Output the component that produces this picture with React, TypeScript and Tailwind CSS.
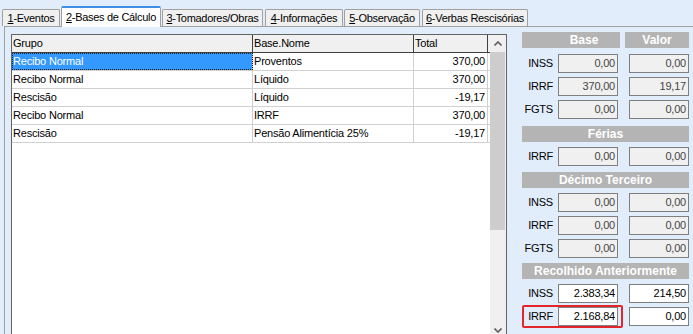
import React from "react"

const rows = [
  { grupo: "Recibo Normal", base: "Proventos", total: "370,00" },
  { grupo: "Recibo Normal", base: "Líquido", total: "370,00" },
  { grupo: "Rescisão", base: "Líquido", total: "-19,17" },
  { grupo: "Recibo Normal", base: "IRRF", total: "370,00" },
  { grupo: "Rescisão", base: "Pensão Alimentícia 25%", total: "-19,17" },
]

const tabs = [
  { key: "1", label: "-Eventos", cls: "w-[58px]" },
  { key: "2", label: "-Bases de Cálculo", cls: "w-[100px]", active: true },
  { key: "3", label: "-Tomadores/Obras", cls: "w-[101px]" },
  { key: "4", label: "-Informações", cls: "w-[78px] ml-[1px]" },
  { key: "5", label: "-Observação", cls: "w-[76px]" },
  { key: "6", label: "-Verbas Rescisórias", cls: "w-[106px] ml-[1px]" },
]

function Chevron({ up }: { up?: boolean }) {
  return (
    <svg width="8" height="5" viewBox="0 0 8 5" className="block">
      <polyline
        points={up ? "0.5,4.5 4,1 7.5,4.5" : "0.5,0.5 4,4 7.5,0.5"}
        fill="none"
        stroke="#606060"
        strokeWidth="1.6"
      />
    </svg>
  )
}

function Box({ value, white, className }: { value: string; white?: boolean; className: string }) {
  return (
    <div
      className={`h-[19px] border border-[#7f7f7f] flex items-center justify-end pr-[2px] ${
        white ? "bg-white text-black" : "bg-[#f0f0f0] text-[#454545]"
      } ${className}`}
    >
      {value}
    </div>
  )
}

function Field({ label, base, valor, white, mark, className = "" }: {
  label: string
  base: string
  valor: string
  white?: boolean
  mark?: boolean
  className?: string
}) {
  return (
    <div className={`flex items-center h-[23px] ${className}`}>
      <div
        className={`flex items-center h-[23px] w-[101px] border-2 rounded-[2px] ${
          mark ? "border-[#e3262c]" : "border-transparent"
        }`}
      >
        <span className="w-[29px] text-right text-black">{label}</span>
        <Box value={base} white={white} className="ml-[5px] w-[60px]" />
      </div>
      <Box value={valor} white={white} className="ml-[6px] w-[60px]" />
    </div>
  )
}

function Bar({ children, className = "" }: { children: React.ReactNode; className?: string }) {
  return (
    <div className={`h-[16px] w-[167px] bg-[#b4b4b4] text-white font-bold text-[12px] tracking-normal flex items-center justify-center ${className}`}>
      {children}
    </div>
  )
}

export default function App() {
  return (
    <div
      className="h-[334px] w-[693px] overflow-hidden bg-[#e2edfb] text-[11px] tracking-[-0.2px] text-black"
      style={{ fontFamily: '"Liberation Sans", Arial, sans-serif' }}
    >
      {/* abas */}
      <div className="h-[26px] flex items-end pl-[2px] gap-[1px]">
        {tabs.map((t) =>
          t.active ? (
            <div
              key={t.key}
              className={`${t.cls} h-[21px] -mb-px relative z-10 bg-white border border-b-0 border-[#a0a0a0] border-t-2 border-t-[#3d8fe3] rounded-t-[2px] flex items-center justify-center tracking-[-0.3px]`}
            >
              <span className="underline">{t.key}</span>
              {t.label}
            </div>
          ) : (
            <div
              key={t.key}
              className={`${t.cls} h-[17px] bg-[#f0f0f0] border border-b-0 border-[#a0a0a0] rounded-t-[2px] flex items-center justify-center tracking-[-0.3px]`}
            >
              <span className="underline">{t.key}</span>
              {t.label}
            </div>
          )
        )}
      </div>

      {/* conteúdo da aba */}
      <div className="ml-[4px] h-[320px] border-l border-t border-[#a0a0a0] flex items-start pl-[6px] pt-[5px]">
        {/* grade */}
        <div className="mt-[2px] w-[496px] h-[306px] border border-[#646464] bg-white flex">
          <div className="w-[478px] flex flex-col">
            <div className="flex h-[18px] bg-[#f0f0f0] border-b border-[#404040]">
              <div className="w-[241px] border-r border-[#404040] pl-[1px] flex items-center">Grupo</div>
              <div className="w-[161px] border-r border-[#404040] pl-[1px] flex items-center">Base.Nome</div>
              <div className="w-[74px] border-r border-[#404040] pl-[1px] flex items-center">Total</div>
            </div>
            {rows.map((r, i) => (
              <div key={i} className="flex h-[18px] border-b border-[#d0d0d0]">
                <div
                  className={`w-[241px] border-r border-[#d0d0d0] pl-[1px] flex items-center ${
                    i === 0 ? "bg-[#3399ff] text-white outline-1 outline-dotted -outline-offset-1 outline-[#1a1a1a]" : ""
                  }`}
                >
                  {r.grupo}
                </div>
                <div className="w-[161px] border-r border-[#d0d0d0] pl-[1px] flex items-center">{r.base}</div>
                <div className="w-[74px] border-r border-[#d0d0d0] pr-[2px] flex items-center justify-end">{r.total}</div>
              </div>
            ))}
          </div>

          {/* barra de rolagem */}
          <div className="w-[16px] bg-[#f0f0f0] flex flex-col">
            <div className="h-[17px] flex items-center justify-center">
              <Chevron up />
            </div>
            <div className="h-[178px] bg-[#cdcdcd] mr-[1px]" />
            <div className="flex-1" />
            <div className="h-[17px] flex items-center justify-center">
              <Chevron />
            </div>
          </div>
        </div>

        {/* bases / valores */}
        <div className="ml-[15px] flex flex-col">
          <div className="flex">
            <div className="h-[16px] w-[98px] bg-[#b4b4b4] text-white font-bold text-[12px] tracking-normal flex items-center justify-center pl-[26px]">
              Base
            </div>
            <div className="h-[16px] w-[64px] ml-[5px] bg-[#b4b4b4] text-white font-bold text-[12px] tracking-normal flex items-center justify-center">
              Valor
            </div>
          </div>
          <Field className="mt-[4px]" label="INSS" base="0,00" valor="0,00" />
          <Field label="IRRF" base="370,00" valor="19,17" />
          <Field label="FGTS" base="0,00" valor="0,00" />

          <Bar className="mt-[5px]">Férias</Bar>
          <Field className="mt-[3px]" label="IRRF" base="0,00" valor="0,00" />

          <Bar className="mt-[4px]">Décimo Terceiro</Bar>
          <Field className="mt-[3px]" label="INSS" base="0,00" valor="0,00" />
          <Field label="IRRF" base="0,00" valor="0,00" />
          <Field label="FGTS" base="0,00" valor="0,00" />

          <Bar className="mt-[3px]">Recolhido Anteriormente</Bar>
          <Field className="mt-[3px]" label="INSS" base="2.383,34" valor="214,50" white />
          <Field label="IRRF" base="2.168,84" valor="0,00" white mark />
        </div>
      </div>
    </div>
  )
}
